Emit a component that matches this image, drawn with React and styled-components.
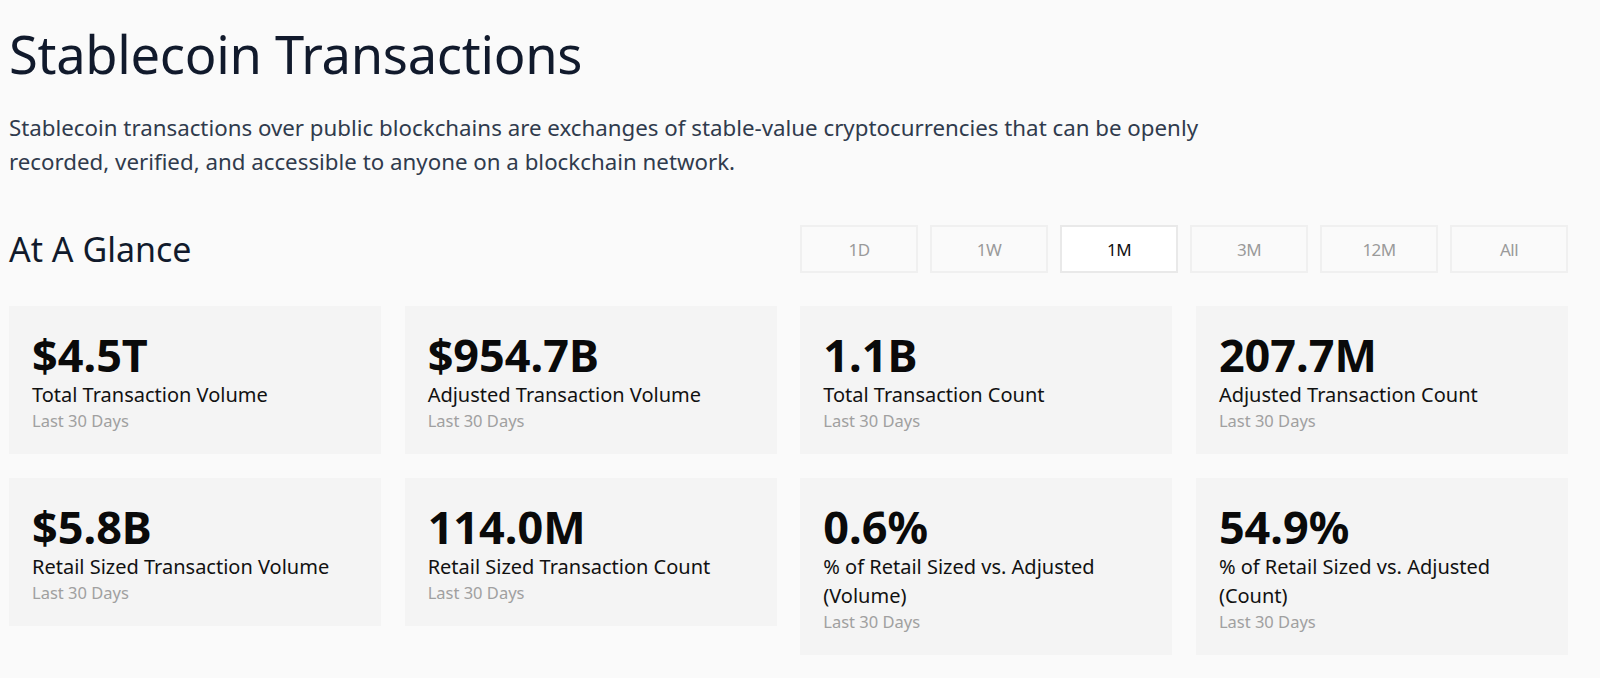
import React, { useState } from 'react';
import styled, { createGlobalStyle } from 'styled-components';

const GlobalStyle = createGlobalStyle`
  body {
    margin: 0;
    background: #fafafa;
    font-family: "Noto Sans", "Open Sans", sans-serif;
  }
`;

const ranges = ['1D', '1W', '1M', '3M', '12M', 'All'];

const stats = [
  { value: '$4.5T', label: 'Total Transaction Volume' },
  { value: '$954.7B', label: 'Adjusted Transaction Volume' },
  { value: '1.1B', label: 'Total Transaction Count' },
  { value: '207.7M', label: 'Adjusted Transaction Count' },
  { value: '$5.8B', label: 'Retail Sized Transaction Volume' },
  { value: '114.0M', label: 'Retail Sized Transaction Count' },
  { value: '0.6%', label: '% of Retail Sized vs. Adjusted (Volume)' },
  { value: '54.9%', label: '% of Retail Sized vs. Adjusted (Count)' },
];

function App() {
  const [range, setRange] = useState('1M');

  return (
    <Page>
      <GlobalStyle />
      <Title>Stablecoin Transactions</Title>
      <Description>
        Stablecoin transactions over public blockchains are exchanges of stable-value cryptocurrencies that can be openly
        recorded, verified, and accessible to anyone on a blockchain network.
      </Description>

      <GlanceHeader>
        <SectionTitle>At A Glance</SectionTitle>
        <RangeGroup>
          {ranges.map((r) => (
            <RangeButton key={r} active={r === range} onClick={() => setRange(r)}>
              {r}
            </RangeButton>
          ))}
        </RangeGroup>
      </GlanceHeader>

      <Grid>
        {stats.map((s) => (
          <Card key={s.value}>
            <Value>{s.value}</Value>
            <Label>{s.label}</Label>
            <Period>Last 30 Days</Period>
          </Card>
        ))}
      </Grid>
    </Page>
  );
}

const Page = styled.div`
  width: 1559px;
  padding: 0 9px;
`;

const Title = styled.h1`
  margin: 0;
  padding-top: 18px;
  font-size: 52.5px;
  line-height: 72px;
  font-weight: 400;
  color: #111a2c;
  letter-spacing: -0.3px;
`;

const Description = styled.p`
  margin: 21px 0 0;
  max-width: 1220px;
  font-size: 22.3px;
  line-height: 34px;
  color: #303b4d;
`;

const GlanceHeader = styled.div`
  margin-top: 46px;
  height: 48px;
  display: flex;
  align-items: center;
  justify-content: space-between;
`;

const SectionTitle = styled.h2`
  margin: 0;
  font-size: 34px;
  font-weight: 400;
  color: #111a2c;
`;

const RangeGroup = styled.div`
  display: flex;
  gap: 12px;
`;

const RangeButton = styled.button.withConfig({
  shouldForwardProp: (p) => p !== 'active',
})`
  width: 118px;
  height: 48px;
  border: 2px solid ${(p) => (p.active ? '#e9e9e9' : '#f0f0f0')};
  background: ${(p) => (p.active ? '#ffffff' : '#fafafa')};
  color: ${(p) => (p.active ? '#111' : '#9a9a9a')};
  font-family: "Liberation Sans Narrow", "Noto Sans", sans-serif;
  font-size: 17px;
  letter-spacing: -0.6px;
  cursor: pointer;
`;

const Grid = styled.div`
  margin-top: 33px;
  display: grid;
  grid-template-columns: repeat(4, 1fr);
  gap: 23.5px;
  align-items: start;
`;

const Card = styled.div`
  min-height: 148px;
  box-sizing: border-box;
  padding: 25px 23px 21px;
  background: #f4f4f4;
  display: flex;
  flex-direction: column;
`;

const Value = styled.div`
  font-size: 45px;
  line-height: 48px;
  font-weight: 700;
  color: #0a0a0a;
`;

const Label = styled.div`
  margin-top: 1px;
  font-size: 20px;
  line-height: 29px;
  color: #111;
`;

const Period = styled.div`
  font-size: 16.5px;
  line-height: 24px;
  color: #a0a0a0;
`;

export default App;
